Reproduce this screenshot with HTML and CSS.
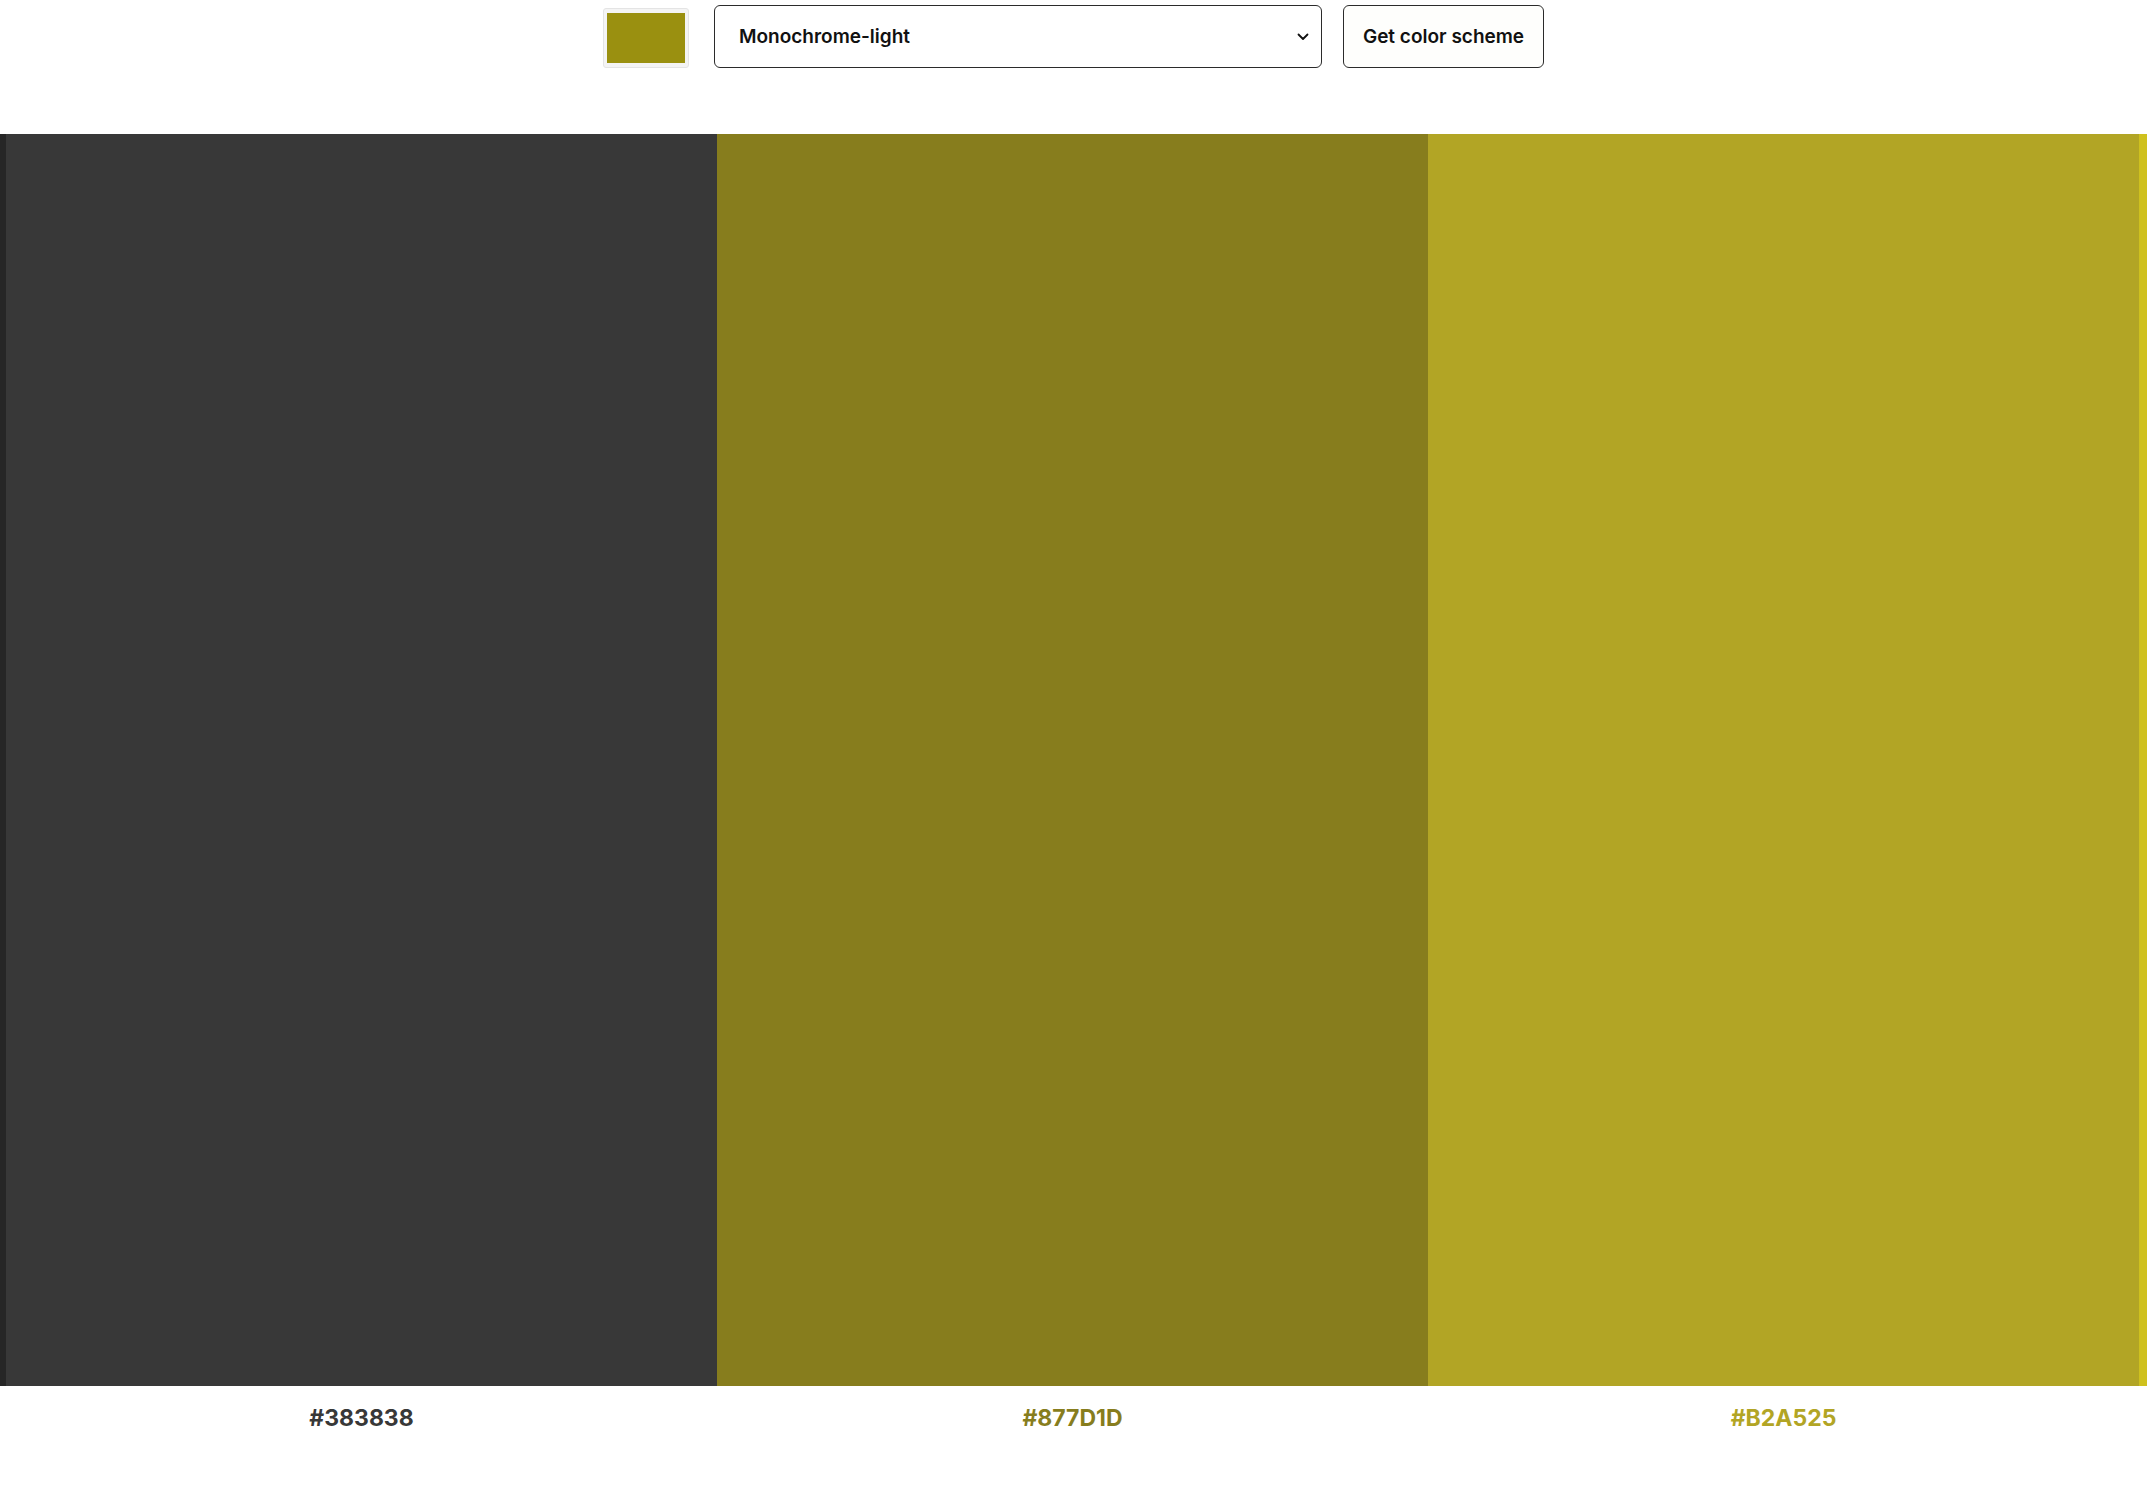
FILE: index.html
```html
<!DOCTYPE html>
<html lang="en">
<head>
<meta charset="utf-8">
<title>Color Scheme</title>
<link rel="stylesheet" href="styles.css">
</head>
<body>
<header class="controls">
  <div class="seed"><div class="seed-fill"></div></div>
  <div class="select">
    <span>Monochrome-light</span>
    <svg class="chev" width="12" height="8" viewBox="0 0 12 8"><path d="M1.5 1.5 L6 6 L10.5 1.5" fill="none" stroke="#111" stroke-width="1.8" stroke-linecap="round" stroke-linejoin="round"/></svg>
  </div>
  <div class="btn">Get color scheme</div>
</header>
<main class="scheme">
  <div class="col">
    <div class="bar c1"></div>
    <div class="label t1">#383838</div>
  </div>
  <div class="col">
    <div class="bar c2"></div>
    <div class="label t2">#877D1D</div>
  </div>
  <div class="col">
    <div class="bar c3"></div>
    <div class="label t3">#B2A525</div>
  </div>
</main>
</body>
</html>
```
FILE: styles.css
```css
* { box-sizing: border-box; }
html, body { margin: 0; padding: 0; background: #fff; }
body { font-family: Inter, "Liberation Sans", sans-serif; color: #111; }

.controls {
  display: flex;
  justify-content: center;
  align-items: flex-start;
  gap: 21px;
  height: 134px;
  padding-top: 5px;
}

.seed {
  width: 86px;
  height: 60px;
  margin-top: 3px;
  margin-right: 4px;
  padding: 4px 3px;
  border: 1px solid #e4e4e4;
  border-radius: 3px;
  background: #f4f4f4;
}
.seed-fill { width: 100%; height: 100%; background: #9a9010; }

.select {
  width: 608px;
  height: 63px;
  border: 1.5px solid #2b2b2b;
  border-radius: 6px;
  display: flex;
  align-items: center;
  justify-content: space-between;
  padding: 0 12px 0 24px;
  font-size: 19px;
  font-weight: 600;
}
.chev { display: block; }

.btn {
  width: 201px;
  height: 63px;
  border: 1.5px solid #2b2b2b;
  border-radius: 6px;
  background: #fefefc;
  display: flex;
  align-items: center;
  justify-content: center;
  font-size: 19px;
  font-weight: 600;
}

.scheme {
  display: flex;
  padding-left: 6px;
  margin-right: 8px;
  height: 1367px;
}
.col { flex: 1; display: flex; flex-direction: column; }
.bar { height: 1252px; }
.c1 { background: #383838; box-shadow: -6px 0 0 #262626; }
.c2 { background: #877d1d; }
.c3 { background: #b2a525; box-shadow: 8px 0 0 #cfc11e; }

.label {
  text-align: center;
  font-size: 23px;
  font-weight: 700;
  padding-top: 18px;
}
.t1 { color: #383838; }
.t2 { color: #877d1d; }
.t3 { color: #b2a525; }
```
